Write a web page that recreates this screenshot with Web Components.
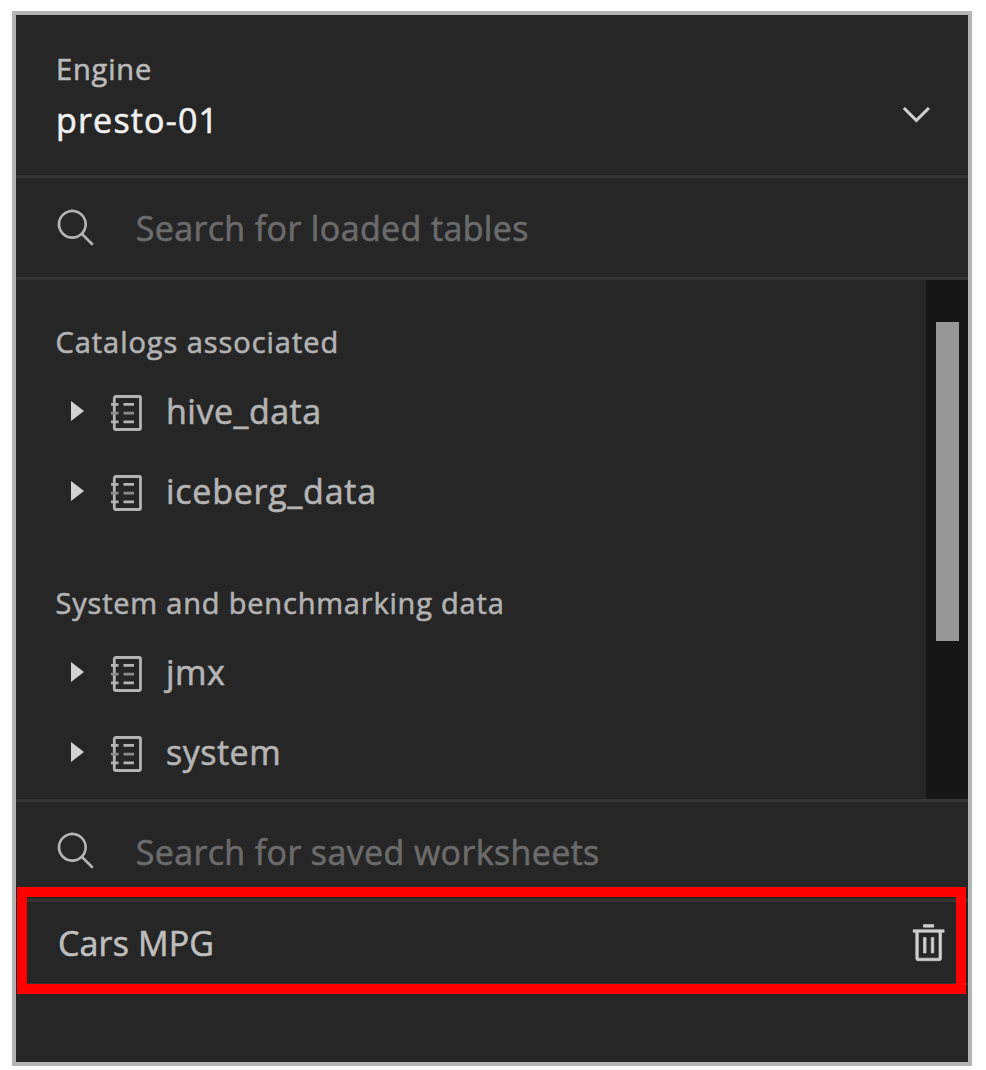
<!DOCTYPE html>
<html lang="en">
<head>
<meta charset="utf-8">
<title>Query workspace</title>
<style>
  body { margin: 0; background: #fff; width: 986px; height: 1070px; overflow: hidden; font-family: "Open Sans", sans-serif; -webkit-text-stroke: .6px currentColor; }
</style>
</head>
<body>
<data-panel></data-panel>
<script>
const define = (name, html) => {
  const t = document.createElement('template');
  t.innerHTML = html;
  customElements.define(name, class extends HTMLElement {
    constructor() {
      super();
      this.attachShadow({ mode: 'open' }).append(t.content.cloneNode(true));
    }
  });
};

define('engine-picker', `
<style>
  :host { display: flex; justify-content: space-between; height: 160px; box-sizing: border-box; padding: 34px 30px 0 40px; }
  .label { font-size: 29px; line-height: 40px; color: #bababa; letter-spacing: .85px; }
  .value { font-size: 34px; line-height: 48px; margin-top: 7px; color: #f0f0f0; letter-spacing: 1.2px; }
  svg { width: 42.7px; height: 42.7px; margin-top: 44px; fill: #d0d0d0; stroke: #d0d0d0; stroke-width: .2; }
</style>
<div><div class="label"><slot name="label"></slot></div><div class="value"><slot></slot></div></div>
<svg viewBox="0 0 16 16"><path d="M8 11 3 6 3.7 5.3 8 9.6 12.3 5.3 13 6z"/></svg>`);

define('search-row', `
<style>
  :host { display: flex; align-items: center; height: 99px; padding-left: 39.3px; gap: 37.7px; border-top: 3px solid #353535; color: #6b6b6b; font-size: 34px; line-height: 48px; white-space: nowrap; letter-spacing: .37px; }
  svg { width: 42.7px; height: 42.7px; fill: #b4b4b4; flex: none; margin-top: 2px; }
</style>
<svg viewBox="0 0 32 32"><path d="M29 27.586l-7.552-7.552a11.018 11.018 0 1 0-1.414 1.414L27.586 29ZM4 13a9 9 0 1 1 9 9 9.01 9.01 0 0 1-9-9Z"/></svg>
<span><slot></slot></span>`);

define('catalog-group', `
<style>
  :host { display: block; }
  .title { font-size: 29px; line-height: 40px; color: #b2b2b2; margin: 0 0 8px 39.5px; letter-spacing: var(--title-spacing, .8px); white-space: nowrap; }
</style>
<div class="title"><slot name="title"></slot></div><slot></slot>`);

define('catalog-item', `
<style>
  :host { display: flex; align-items: center; height: 80px; padding-left: 54.5px; font-size: 34px; line-height: 48px; color: #b4b4b4; letter-spacing: .5px; }
  .caret { width: 13px; height: 20px; fill: #d2d2d2; margin: 1px 27.5px 0 0; }
  .book { width: 31px; height: 36px; margin: 6px 24px 0 0; fill: none; stroke: #b4b4b4; stroke-width: 2.8; }
  .name { margin-top: 2px; }
</style>
<svg class="caret" viewBox="0 0 13 20"><path d="M0 0l13 10L0 20z"/></svg>
<svg class="book" viewBox="0 0 31 36"><rect x="3.3" y="1.5" width="26.2" height="33" rx="1.4"/><path d="M12.5 9.3h10.5M12.5 26.9h10.5M0 9.3h7.5M0 26.9h7.5"/><path stroke="#8a8a8a" d="M12.5 18.1h10.5M0 18.1h7.5"/></svg>
<div class="name"><slot></slot></div>`);

define('scroll-area', `
<style>
  :host { display: flex; height: 519px; border-top: 3px solid #353535; }
  .content { flex: 1; padding-top: 42px; display: flex; flex-direction: column; gap: 53px; box-sizing: border-box; }
  .track { width: 42px; background: #161616; padding: 42px 9px 0 10px; box-sizing: border-box; }
  .thumb { height: 319px; background: #979797; }
</style>
<div class="content"><slot></slot></div><div class="track"><div class="thumb"></div></div>`);

define('worksheet-item', `
<style>
  :host { display: flex; position: relative; align-items: center; justify-content: space-between; height: 81px; padding: 0 18.5px 0 42px; border: solid #353535; border-width: 3px 0 2px; font-size: 34px; line-height: 48px; color: #bebebe; letter-spacing: .15px; }
  svg { width: 41.3px; height: 41.3px; fill: #cfcfcf; stroke: #cfcfcf; stroke-width: .5; }
  .mark { position: absolute; left: 1px; right: 2px; top: -15px; bottom: -11px; border: 10px solid #f00; }
</style>
<span><slot></slot></span>
<svg viewBox="0 0 32 32"><path d="M12 12h2v12h-2zM18 12h2v12h-2zM12 2h8v2h-8z"/><path d="M4 6v2h2v20a2 2 0 0 0 2 2h16a2 2 0 0 0 2-2V8h2V6ZM8 28V8h16v20Z"/></svg>
<div class="mark"></div>`);

define('data-panel', `
<style>
  :host { display: block; margin: 11px 0 0 12px; width: 960px; height: 1055px; box-sizing: border-box; border: 4px solid #b4b4b4; background: #262626; }
  .catalogs { --title-spacing: .95px; }
  .saved { height: 97px; }
  .saved span { position: relative; top: 1px; }
</style>
<engine-picker><span slot="label">Engine</span><span>presto-01</span></engine-picker>
<search-row>Search for loaded tables</search-row>
<scroll-area>
  <catalog-group class="catalogs"><span slot="title">Catalogs associated</span>
    <catalog-item>hive_data</catalog-item><catalog-item style="letter-spacing:.75px">iceberg_data</catalog-item>
  </catalog-group>
  <catalog-group><span slot="title">System and benchmarking data</span>
    <catalog-item>jmx</catalog-item><catalog-item>system</catalog-item>
  </catalog-group>
</scroll-area>
<search-row class="saved"><span>Search for saved worksheets</span></search-row>
<worksheet-item>Cars MPG</worksheet-item>`);
</script>
</body>
</html>
